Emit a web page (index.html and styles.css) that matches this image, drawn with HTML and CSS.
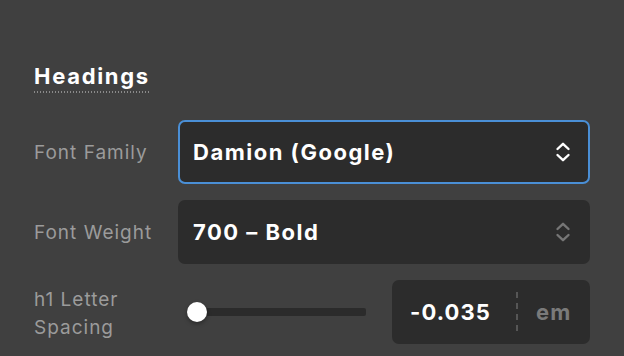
FILE: index.html
```html
<!DOCTYPE html>
<html>
<head>
<meta charset="utf-8">
<link rel="stylesheet" href="styles.css">
</head>
<body>
<div class="panel">
  <div class="heading"><span class="heading-text">Headings</span></div>
  <div class="rows">
    <div class="row">
      <div class="label">Font Family</div>
      <div class="select focused">
        <span class="value">Damion (Google)</span>
        <svg class="chev" width="16" height="22" viewBox="0 0 16 22"><path d="M2.5 8 L8 2.8 L13.5 8 M2.5 14 L8 19.2 L13.5 14" fill="none" stroke="#ffffff" stroke-width="2.4" stroke-linecap="round" stroke-linejoin="round"/></svg>
      </div>
    </div>
    <div class="row">
      <div class="label">Font Weight</div>
      <div class="select">
        <span class="value">700 – Bold</span>
        <svg class="chev" width="16" height="22" viewBox="0 0 16 22"><path d="M2.5 8 L8 2.8 L13.5 8 M2.5 14 L8 19.2 L13.5 14" fill="none" stroke="#767676" stroke-width="2.4" stroke-linecap="round" stroke-linejoin="round"/></svg>
      </div>
    </div>
    <div class="row">
      <div class="label two-line">h1 Letter<br>Spacing</div>
      <div class="spacing">
        <div class="slider">
          <div class="track"></div>
          <div class="thumb"></div>
        </div>
        <div class="number">
          <span class="num">-0.035</span>
          <span class="divider"></span>
          <span class="unit">em</span>
        </div>
      </div>
    </div>
  </div>
</div>
</body>
</html>
```

FILE: styles.css
```css
html, body {
  margin: 0;
  padding: 0;
  background: #404040;
  width: 624px;
  height: 356px;
  overflow: hidden;
}
.panel {
  padding: 60px 34px 0 34px;
  font-family: Inter, "Noto Sans", sans-serif;
}
.heading {
  height: 60px;
}
.heading-text {
  display: inline-block;
  color: #ffffff;
  font-size: 22px;
  font-weight: 700;
  letter-spacing: 1.7px;
  line-height: 32px;
  padding-bottom: 1px;
  background-image: linear-gradient(to right, #8a8a8a 1px, transparent 1px);
  background-size: 3px 2px;
  background-repeat: repeat-x;
  background-position: 0 100%;
}
.rows {
  display: flex;
  flex-direction: column;
  gap: 16px;
}
.row {
  display: grid;
  grid-template-columns: 144px 412px;
  align-items: center;
  height: 64px;
}
.label {
  color: #9b9b9b;
  font-size: 19px;
  letter-spacing: 1px;
  padding-top: 1px;
}
.two-line {
  line-height: 28px;
  padding-top: 4px;
}
.select {
  box-sizing: border-box;
  height: 64px;
  background: #2c2c2c;
  border-radius: 7px;
  display: flex;
  align-items: center;
  justify-content: space-between;
  padding: 0 18px 0 14px;
  border: 1px solid transparent;
}
.select.focused {
  border: 2px solid #4a8fd6;
  padding: 0 17px 0 13px;
}
.value {
  color: #ffffff;
  font-size: 22px;
  font-weight: 700;
  letter-spacing: 1.5px;
}
.chev {
  display: block;
}
.spacing {
  display: flex;
  align-items: center;
  height: 64px;
}
.slider {
  position: relative;
  width: 214px;
  height: 64px;
}
.track {
  position: absolute;
  left: 19px;
  top: 28px;
  width: 169px;
  height: 8px;
  border-radius: 2px;
  background: #2b2b2b;
}
.thumb {
  position: absolute;
  left: 9px;
  top: 22px;
  width: 20px;
  height: 20px;
  border-radius: 50%;
  background: #ffffff;
  box-shadow: 0 2px 4px rgba(0,0,0,0.35);
}
.number {
  box-sizing: border-box;
  width: 198px;
  height: 64px;
  background: #2c2c2c;
  border-radius: 7px;
  display: flex;
  align-items: center;
  padding-left: 18px;
}
.num {
  color: #ffffff;
  font-size: 22px;
  font-weight: 700;
  letter-spacing: 1.1px;
  width: 106px;
}
.divider {
  width: 2px;
  height: 40px;
  background-image: linear-gradient(to bottom, #565656 6px, transparent 6px);
  background-size: 2px 11px;
}
.unit {
  color: #7a7a7a;
  font-size: 22px;
  font-weight: 700;
  letter-spacing: 1.2px;
  margin-left: 18px;
}
```
